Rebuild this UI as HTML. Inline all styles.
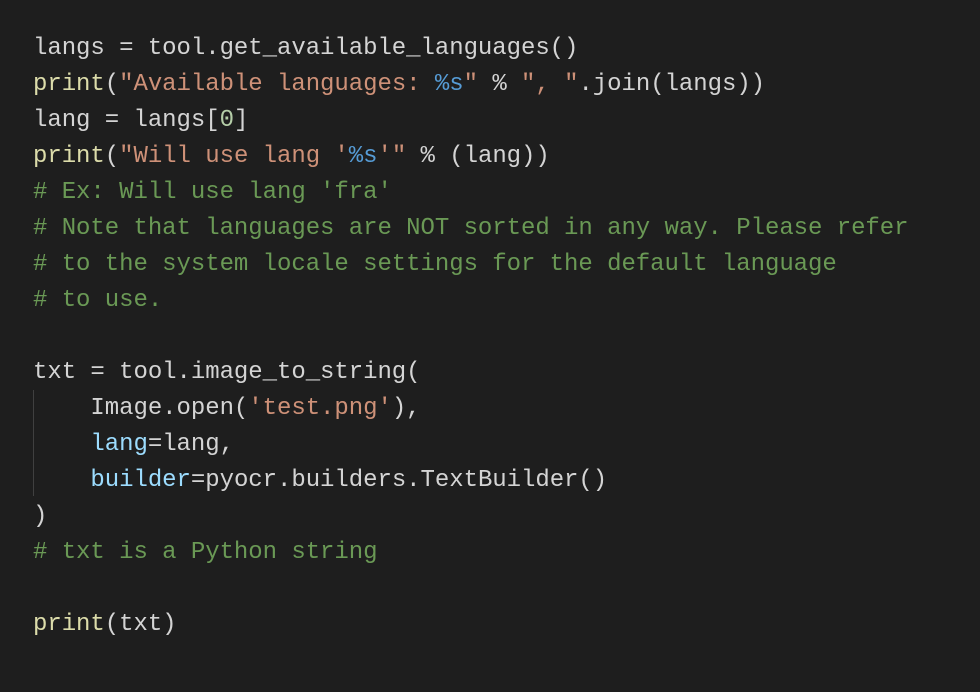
<!DOCTYPE html>
<html><head><style>
html,body{margin:0;padding:0;background:#1e1e1e;width:980px;height:692px;overflow:hidden}
pre{position:absolute;left:33px;top:31px;margin:0;font-family:"Liberation Mono",monospace;font-size:24px;line-height:36px;letter-spacing:-0.05px;color:#d4d4d4}
.f{color:#dcdcaa}.s{color:#ce9178}.k{color:#569cd6}.n{color:#b5cea8}.c{color:#6a9955}.p{color:#9cdcfe}
.g{position:absolute;left:33px;top:390px;width:1px;height:106px;background:#404040}
</style></head><body>
<div class="g"></div>
<pre>langs = tool.get_available_languages()
<span class="f">print</span>(<span class="s">"Available languages: </span><span class="k">%s</span><span class="s">"</span> % <span class="s">", "</span>.join(langs))
lang = langs[<span class="n">0</span>]
<span class="f">print</span>(<span class="s">"Will use lang '</span><span class="k">%s</span><span class="s">'"</span> % (lang))
<span class="c"># Ex: Will use lang 'fra'</span>
<span class="c"># Note that languages are NOT sorted in any way. Please refer</span>
<span class="c"># to the system locale settings for the default language</span>
<span class="c"># to use.</span>

txt = tool.image_to_string(
    Image.open(<span class="s">'test.png'</span>),
    <span class="p">lang</span>=lang,
    <span class="p">builder</span>=pyocr.builders.TextBuilder()
)
<span class="c"># txt is a Python string</span>

<span class="f">print</span>(txt)</pre>
</body></html>
